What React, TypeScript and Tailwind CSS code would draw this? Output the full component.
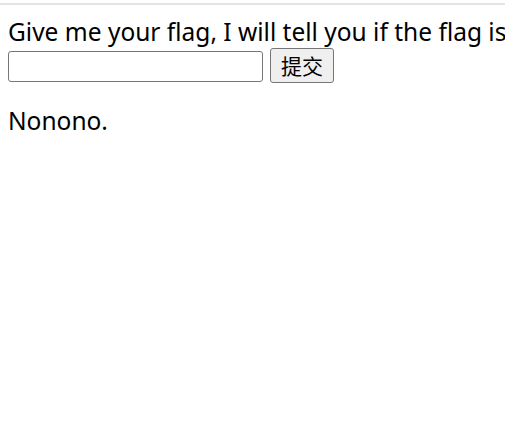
import React from 'react';

const App = () => {
  return (
    <div className="min-h-screen w-full overflow-hidden bg-white text-black font-['Noto_Sans','Noto_Sans_CJK_SC',sans-serif]">
      <div className="pt-[3px]">
        <div className="h-[2px] bg-[#e4e4e4]" />
      </div>

      <div className="px-2">
        <p className="mt-[12px] whitespace-nowrap text-[24.5px] leading-[30px]">
          Give me your flag, I will tell you if the flag is right.
        </p>

        <form className="mt-[1px] flex items-end gap-[7px]" onSubmit={e => e.preventDefault()}>
          <input
            type="text"
            name="flag"
            className="mb-[1px] h-[31px] w-[255px] rounded-[3px] border border-[#767676] bg-white px-1 text-[20px] outline-none"
          />
          <button
            type="submit"
            className="flex h-[35px] w-[64px] items-center justify-center rounded-[3px] border border-[#767676] bg-[#efefef] text-[21px] leading-none font-['Noto_Sans_CJK_SC',sans-serif]"
          >
            提交
          </button>
        </form>

        <p className="mt-[23px] text-[24.5px] leading-[30px]">Nonono.</p>
      </div>
    </div>
  );
};

export default App;
